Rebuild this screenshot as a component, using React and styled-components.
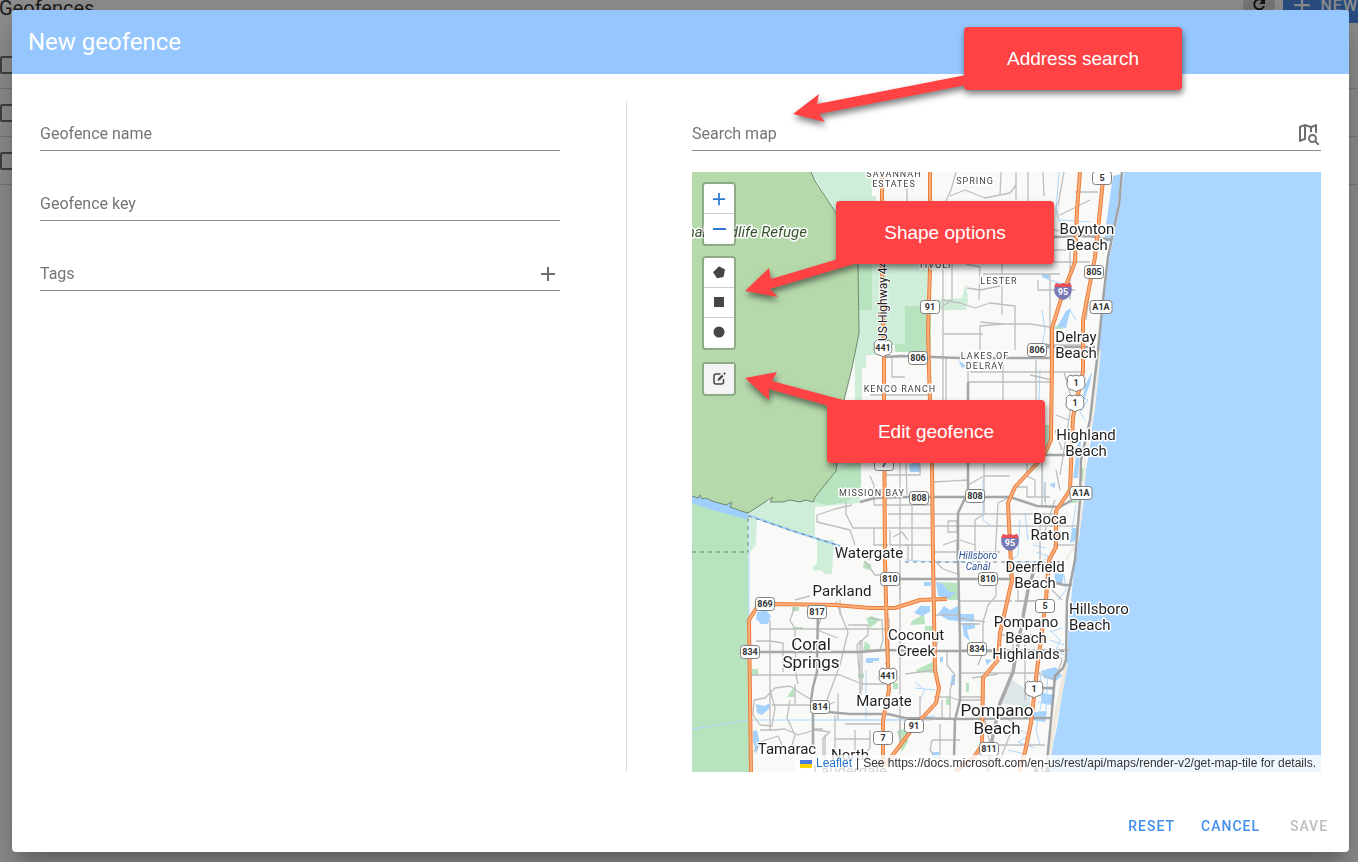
import React from "react";
import styled, { createGlobalStyle } from "styled-components";

const GlobalStyle = createGlobalStyle`
  *, *::before, *::after { box-sizing: border-box; }
  body {
    margin: 0;
    overflow: hidden;
    background: #ffffff;
    font-family: Roboto, "Liberation Sans", sans-serif;
  }
  button, input { font: inherit; }
`;

/* ---------- page behind the dialog ---------- */

const Page = styled.div`
  height: 100vh;
  overflow: hidden;
`;

const PageBar = styled.header`
  display: flex;
  align-items: center;
  gap: 8px;
  height: 36px;
  margin: -13px 0 18px -1px;
`;

const PageTitle = styled.h1`
  flex: 1;
  margin: 0;
  padding-top: 6px;
  font-size: 20px;
  font-weight: 400;
  line-height: 36px;
  color: #333333;
`;

const RoundButton = styled.button`
  display: grid;
  place-items: center;
  width: 32px;
  height: 32px;
  padding: 0;
  border: 0;
  border-radius: 50%;
  background: #d5d5d5;
  color: #222222;
`;

const NewButton = styled.button`
  display: flex;
  align-items: center;
  gap: 10px;
  height: 36px;
  margin-right: -10px;
  padding: 0 10px;
  border: 0;
  border-radius: 4px;
  background: #4a8ae8;
  color: #ffffff;
  font-size: 16px;
  font-weight: 500;
  letter-spacing: 1px;
`;

const PageRow = styled.div`
  display: flex;
  align-items: center;
  height: 48px;
  border-bottom: 1px solid #d8d8d8;
`;

const RowCheck = styled.input`
  appearance: none;
  width: 18px;
  height: 18px;
  margin: 0;
  border: 2px solid #757575;
  border-radius: 2px;
`;

/* ---------- dialog ---------- */

const Backdrop = styled.div`
  position: fixed;
  inset: 0;
  padding: 10px 9px 10px 12px;
  background: rgba(0, 0, 0, 0.44);
`;

const Dialog = styled.section`
  border-radius: 4px;
  background: #ffffff;
  box-shadow:
    0 11px 15px -7px rgba(0, 0, 0, 0.2),
    0 24px 38px 3px rgba(0, 0, 0, 0.14),
    0 9px 46px 8px rgba(0, 0, 0, 0.12);
`;

const DialogHeader = styled.header`
  display: flex;
  align-items: center;
  height: 64px;
  padding: 0 16px;
  border-radius: 4px 4px 0 0;
  background: #95c6fd;
`;

const DialogTitle = styled.h2`
  margin: 0;
  font-size: 24px;
  font-weight: 400;
  line-height: 32px;
  color: #ffffff;
`;

const DialogBody = styled.div`
  display: grid;
  grid-template-columns: 521fr 1px 629fr;
  column-gap: 65px;
  padding: 27px 28px 0;
`;

const FieldColumn = styled.div`
  display: flex;
  flex-direction: column;
  gap: 20px;
  padding-right: 1px;
`;

const Divider = styled.div`
  background: #dedede;
`;

const MapColumn = styled.div`
  position: relative;
  display: flex;
  flex-direction: column;
  gap: 21px;
`;

const FieldBox = styled.div`
  display: grid;
  grid-template-columns: 1fr auto;
  align-items: center;
  height: 50px;
  padding: 17px 0 0;
  border-bottom: 1px solid #8c8c8c;
`;

const FieldLabel = styled.label`
  grid-area: 1 / 1;
  font-size: 16px;
  line-height: 24px;
  color: #757575;
  pointer-events: none;
`;

const FieldInput = styled.input`
  grid-area: 1 / 1;
  width: 100%;
  height: 24px;
  padding: 0;
  border: 0;
  outline: 0;
  background: transparent;
  font-size: 16px;
`;

const FieldAction = styled.button`
  display: grid;
  place-items: center;
  height: 24px;
  padding: 0 ${(p) => p.$inset || 0}px 0 0;
  border: 0;
  background: transparent;
  color: #6e6e6e;
`;

const DialogFooter = styled.footer`
  display: flex;
  justify-content: flex-end;
  gap: 8px;
  padding: 36px 8px 8px;
`;

const TextButton = styled.button`
  min-width: 64px;
  height: 36px;
  padding: 0 9px;
  border: 0;
  border-radius: 4px;
  background: transparent;
  color: #448fed;
  font-size: 14px;
  font-weight: 500;
  letter-spacing: 1px;
  &:disabled { color: #bdbdbd; }
`;

function Field({ id, label, children }) {
  return (
    <FieldBox>
      <FieldInput id={id} type="text" />
      <FieldLabel htmlFor={id}>{label}</FieldLabel>
      {children}
    </FieldBox>
  );
}

/* ---------- map ---------- */

const MapFrame = styled.div`
  position: relative;
  height: 600px;
  overflow: hidden;
  background: #aad6ff;
`;

const MapDrawing = styled.svg`
  display: block;
  width: 100%;
  height: 600px;
  font-family: Roboto, "Liberation Sans", sans-serif;
`;

const MapControls = styled.div`
  position: absolute;
  top: 10px;
  left: 10px;
  display: flex;
  flex-direction: column;
  gap: 10px;
`;

const DrawControls = styled.div`
  display: flex;
  flex-direction: column;
  gap: 12px;
`;

const ControlBar = styled.div`
  border: 2px solid rgba(0, 0, 0, 0.22);
  border-radius: 4px;
  background-clip: padding-box;
`;

const ControlButton = styled.button`
  display: grid;
  place-items: center;
  width: 30px;
  height: 30px;
  padding: 0;
  border: 0;
  border-bottom: 1px solid #cccccc;
  background: ${(p) => (p.$muted ? "#f4f4f4" : "#ffffff")};
  color: ${(p) => (p.$accent ? "#2f78d4" : "#464646")};
  &:first-child { border-radius: 2px 2px 0 0; }
  &:last-child { border-bottom-color: transparent; border-radius: 0 0 2px 2px; }
`;

const Attribution = styled.div`
  position: absolute;
  right: 0;
  bottom: 0;
  display: flex;
  align-items: center;
  gap: 4px;
  height: 17px;
  padding: 0 5px;
  background: rgba(255, 255, 255, 0.8);
  color: #333333;
  font-family: "Liberation Sans", Arial, sans-serif;
  font-size: 12px;
  line-height: 17px;
  white-space: nowrap;
`;

const AttributionLink = styled.a`
  color: #2473cf;
  text-decoration: none;
`;

/* ---------- call-outs ---------- */

const CalloutLayer = styled.div`
  position: absolute;
  inset: 0;
  pointer-events: none;
  filter: drop-shadow(1px 4px 3px rgba(0, 0, 0, 0.5));
`;

const CalloutArrows = styled.svg`
  position: absolute;
  top: 0;
  left: 0;
  overflow: visible;
`;

const CalloutBox = styled.div`
  position: absolute;
  top: ${(p) => p.$top}px;
  left: ${(p) => p.$left}px;
  display: grid;
  place-items: center;
  width: 218px;
  height: 63px;
  border-radius: 4px;
  background: #ff4244;
  color: #ffffff;
  font-family: "Liberation Sans", Arial, sans-serif;
  font-size: 19px;
`;

/* The map plane is drawn in a 629 x 600 window whose origin is (692, 172). */

const refugeEdge =
  "M811 172L815 181L836 213L850 240L858 265L859 333L852 368L844 400L837 463L836 471L815 497L813 502L806 500L800 502L790 500L783 502H770L773 497L748 513L741 511L730 507L732 502L726 505L712 501L706 498L702 499L700 495L698 498L692 496";

const refuge = `${refugeEdge}V172Z`;

const lightGreens = [
  "M811 172H872V196H876V264H930V310H906V345H883V355H866V368H862V400H860V503L815 507V539L748 516L740 505L813 498L855 440V333L858 265L836 213Z",
  "M750 518H757L756 545L750 552Z",
  "M817 540H834L832 574H826L820 570L814 571L812 568L817 563Z",
  "M930 300L962 298L966 283L968 300L966 310H930Z",
];

const midGreens = [
  "M692 502L748 516L749 620V772H692Z",
  "M858 265H872V310H858Z",
  "M905 306H931V352H895V344H905Z",
  "M836 471L850 462H861V490L846 502L828 505L813 502L815 497Z",
  "M692 505L720 512L746 517L748 560L692 560Z",
  "M792 607H799V611H792Z",
  "M794 627H803V629H792Z",
  "M865 641L870 645V652H863Z",
  "M787 697L794 687V697Z",
  "M752 669H758V675H752Z",
  "M858 674H864V678H858Z",
  "M893 683H898V689H893Z",
  "M866 618L872 616L880 620L870 628Z",
  "M864 561L872 565L869 570L863 568Z",
  "M936 582L958 583V600L948 600L944 592Z",
  "M912 621L924 614L925 624L910 625Z",
  "M916 670L935 661V673L917 672Z",
  "M925 626H934V638H924Z",
  "M966 683H969V692H966Z",
  "M946 698H950V705H946Z",
  "M1042 425H1049V450L1042 456Z",
  "M1055 326L1062 325L1063 329H1054Z",
  "M1071 498H1078L1077 503H1070Z",
  "M1081 468H1084V481H1080Z",
  "M897 731L907 728L908 742L902 752Z",
  "M1020 704L1030 702V710H1020Z",
];

const lakes = [
  "M757 612L766 610L771 616L768 624L761 624L756 619Z",
  "M756 704L764 706L771 703L770 708L762 715L757 713Z",
  "M753 731L757 730L760 744L756 754L753 740Z",
  "M866 658H879V661H873V663H866Z",
  "M938 614L944 606L950 610L960 605V614H974V622L958 621L948 620Z",
  "M936 582L943 584L949 592L956 592L948 599L938 596Z",
  "M924 582H931V586H924Z",
  "M962 623H975V628L967 630L970 641L964 636Z",
  "M920 606H930V612L922 616L914 613Z",
  "M1042 274H1049V280L1042 277Z",
  "M952 675H955V685H950Z",
  "M940 657H943V662H940Z",
  "M985 659L992 660L987 665Z",
  "M909 465L919 460L921 472H910Z",
  "M958 360L966 366L962 368Z",
  "M1049 485L1055 482V488Z",
  "M1066 311L1071 308L1066 328L1057 327Z",
  "M1108 214L1118 207L1110 240L1104 245Z",
  "M1113 176L1121 174L1117 210L1106 225Z",
  "M1085 385L1092 372L1090 384L1082 405Z",
  "M1078 440L1082 430L1078 478L1073 478Z",
  "M1072 528H1078L1075 541L1070 543Z",
  "M1054 573L1064 574L1062 585L1056 584Z",
  "M1041 671L1056 667L1062 676L1056 681L1044 678Z",
  "M1042 693L1055 695L1053 704L1041 703Z",
  "M1033 712L1047 711L1045 722L1032 720Z",
  "M932 752H939V758H932Z",
];

const minorRoads = [
  "M907 172V264M1001 172L1000 195M1016 185L1010 193L985 198L965 190L950 196M1016 172V200M1028 172V201M1043 172L1044 196M956 172L951 190L945 203",
  "M952 264V300L943 306M966 264L980 267L979 300M1002 264V315M967 288L980 290L1000 286M943 300L960 303L975 308L990 303L1015 306V350",
  "M943 264V440M1003 324L980 326L980 350M980 322L1002 324L1030 324L1050 327M943 334H983M1054 262H1090M1054 230L1110 240",
  "M983 274H1060M1050 274V357M1038 280V290H1075M1054 250H1070V300M1060 215L1090 200M1075 192H1098M1064 172L1058 205",
  "M968 357V382H1050M1003 357V400M970 372H1050M1036 360V400M1050 345H1083M1046 372H1083M1086 320L1092 270",
  "M884 357H898M884 395H930M892 357V377H905M946 357V400M870 395H884V420",
  "M900 463V600M906 463L907 495M912 500V560M884 475H920V463M888 514H1056M935 526H1078M948 521H957V532H948V521",
  "M933 482L968 480V485L984 476H1010M984 463V514L975 520V560M1010 497L998 503L995 560M1016 487L1027 487V497H1050M1027 463V476L1035 480V496M1042 463V507M1045 482V502",
  "M870 476L874 485V505H933M852 505L835 509L817 515V522L850 530L855 545M846 502V514L853 528H934M874 528V545H888M890 530V545H908V560M893 537L902 532L908 540",
  "M865 561L875 575H887M934 560L943 569L960 575M905 545H933M934 552H1000M943 545L957 540V560",
  "M770 620V730M770 629H886M770 641L783 643V672M770 641H756M836 601L843 620L848 632L840 665L825 705M752 675H840L862 684H886",
  "M795 607L790 620L795 629L796 675L798 684M823 612L817 630L838 638M840 615V600M795 600L810 596M860 640L860 695M848 625H868L868 635L857 645L861 695",
  "M870 618L882 620L883 640L880 650H866M889 618V660L885 664M900 575V740M862 640V690M828 596L820 592",
  "M775 688L790 686L800 693L812 700M775 688L765 698L754 700L753 715L760 725L772 726L775 708L770 690M790 700L787 718L795 735L792 745",
  "M760 730H772L785 729L798 735L815 730L830 732L823 738V760M772 705H812M795 684V704M835 715V760H885M845 724H885M855 730V758M870 730V748L862 757M835 739H870",
  "M754 752L760 742L778 736L782 745M812 729H823M825 735V765M820 708L835 702M838 693V720",
  "M935 615H960M960 618L985 622M938 640L935 650M947 652V665L955 675L950 690V720M962 650H1070M983 622V652L978 665M972 678L998 674",
  "M905 674L935 670M900 718V750M934 697H950L958 700H983M920 696V718M942 700V718M932 740H960M932 740L930 750L935 757L955 760M940 724V760",
  "M960 697H985M960 673H1000M1000 673H1040M1013 640V670M1025 640V700M985 720L990 745H1045M1005 718L1015 722L1000 760M1018 585V601H1040",
  "M960 601H1012M996 584L996 596L988 605L983 622M960 624H980M960 540L975 545M1010 560V580M1015 601H1050M1052 590L1062 600M1000 635H1043M1055 650L1062 660L1055 680L1035 672",
  "M1056 470L1060 490M1064 372L1072 400L1064 450L1060 475M1056 415L1068 420M1055 430L1062 450M1030 375L1052 380M1055 500L1042 540M1040 514V560M1053 545H1075",
];

const greyRoads = [
  "M884 357L900 356L960 358H1050",
  "M860 502L875 498L907 497L935 497H1010L1037 506L1060 507L1072 500",
  "M1054 237L1090 236L1112 240",
  "M1047 347H1095M1046 455H1082",
  "M880 579H1010M897 579H960",
  "M760 652H860L885 650L935 651H1002M1002 651H1064",
  "M818 613L817 660V672L813 687L811 700L813 712V745",
  "M828 712L850 714H888L905 718L960 719L1050 718",
  "M968 382V492L958 513V560L960 640V700L955 720L954 757",
  "M1036 345H1054M1056 583L1064 585H1072",
  "M1038 688H1054",
];

const railRoad = "M1035 567L1028 590L1020 633L1013 672L1000 703L992 740L988 772";

const coastRoad =
  "M1122 172L1119 205L1108 257L1103 300L1098 350L1090 420L1081 460L1080 500L1075 560L1067 600L1066 660L1063 668L1055 676L1052 710L1046 772";

const waterLines = [
  "M1059 172L1056 210L1062 230M1050 280L1066 285M1042 310L1045 330L1042 345M1040 370L1039 400",
  "M1042 455L1043 490L1046 505M983 480V520L990 525M1025 513L1028 540M1020 520L1018 555L1012 560",
  "M692 729L750 720H890L935 716M866 670V720M835 720H932",
  "M749 516V620M1080 395L1088 400L1080 412L1085 420M1076 505L1072 530M1064 575L1066 590L1058 600",
  "M1050 640L1064 645M1050 632L1062 628M1048 650L1064 655M1052 660L1060 640L1050 630",
  "M1040 672L1042 700L1036 730L1040 745M1048 668L1046 710M1055 690L1042 688M1054 697L1040 696M1052 705L1038 702",
  "M1005 735L1020 730L1030 735L1018 742L1035 748M1008 750L1025 754M915 682L925 690L920 700M915 688L935 690",
  "M905 560L933 562L975 562M1010 562H1040M1060 220L1090 222M1100 230L1090 280M1070 310L1076 320",
  "M1033 545L1046 548M1036 552L1048 556L1042 562M1040 542V560",
];

const orangeRoads = [
  "M882 172V264L884 360V400L885 560L887 640L889 690L883 720V772",
  "M930 172V270L928 330L929 370L932 463L933 560L935 670L939 688L936 703L913 728L880 772",
  "M1080 172L1077 210L1075 262L1063 293L1052 328V360L1051 440L1043 457L1015 487L1008 503L1010 545L1012 580L1000 633L998 660L983 678L982 745L974 757L955 772",
  "M1103 180L1100 210L1095 257L1083 320V372L1073 417L1070 490L1056 511V547L1049 560L1046 600L1037 670L1031 723L1025 752L1019 772",
  "M751 772L749 620L757 607L775 604L835 605L870 608H895L920 600L947 599",
];

const shields = [
  { x: 1102, y: 178, text: "5" },
  { x: 1094, y: 272, text: "805" },
  { x: 1101, y: 307, text: "A1A", w: 22 },
  { x: 930, y: 307, text: "91" },
  { x: 918, y: 358, text: "806" },
  { x: 1037, y: 350, text: "806" },
  { x: 919, y: 498, text: "808" },
  { x: 975, y: 496, text: "808" },
  { x: 1081, y: 493, text: "A1A", w: 22 },
  { x: 884, y: 464, text: "7" },
  { x: 890, y: 579, text: "810" },
  { x: 988, y: 579, text: "810" },
  { x: 765, y: 604, text: "869" },
  { x: 817, y: 612, text: "817" },
  { x: 1045, y: 606, text: "5" },
  { x: 750, y: 652, text: "834" },
  { x: 977, y: 649, text: "834" },
  { x: 820, y: 707, text: "814" },
  { x: 914, y: 726, text: "91" },
  { x: 883, y: 738, text: "7" },
  { x: 989, y: 749, text: "811" },
];

const usShields = [
  { x: 883, y: 348, text: "441" },
  { x: 1076, y: 383, text: "1" },
  { x: 1075, y: 403, text: "1" },
  { x: 888, y: 676, text: "441" },
  { x: 1034, y: 689, text: "1" },
];

const interstates = [
  { x: 1063, y: 291 },
  { x: 1010, y: 542 },
];

const towns = [
  { x: 1087, y: 234, lines: ["Boynton", "Beach"] },
  { x: 1076, y: 342, lines: ["Delray", "Beach"] },
  { x: 1086, y: 440, lines: ["Highland", "Beach"] },
  { x: 1050, y: 524, lines: ["Boca", "Raton"] },
  { x: 1035, y: 572, lines: ["Deerfield", "Beach"] },
  { x: 1026, y: 627, lines: ["Pompano", "Beach", "Highlands"] },
  { x: 869, y: 558, lines: ["Watergate"] },
  { x: 842, y: 596, lines: ["Parkland"] },
  { x: 916, y: 640, lines: ["Coconut", "Creek"] },
  { x: 884, y: 706, lines: ["Margate"] },
  { x: 787, y: 754, lines: ["Tamarac"] },
  { x: 850, y: 760, lines: ["North", "Lauderdale"] },
];

const cities = [
  { x: 811, y: 650, lines: ["Coral", "Springs"] },
  { x: 997, y: 716, lines: ["Pompano", "Beach"] },
];

const districts = [
  { x: 894, y: 177, lines: ["SAVANNAH", "ESTATES"] },
  { x: 975, y: 184, lines: ["SPRING"] },
  { x: 935, y: 268, lines: ["TIVOLI"] },
  { x: 999, y: 284, lines: ["LESTER"] },
  { x: 985, y: 359, lines: ["LAKES OF", "DELRAY"] },
  { x: 900, y: 392, lines: ["KENCO RANCH"] },
  { x: 872, y: 496, lines: ["MISSION BAY"] },
];

function PlaceLabel({ place, size, step, spacing = 0, fill = "#1f1f1f", anchor = "middle", italic }) {
  return (
    <text
      textAnchor={anchor}
      fontSize={size}
      fontStyle={italic ? "italic" : "normal"}
      letterSpacing={spacing}
      fill={fill}
      stroke="#ffffff"
      strokeWidth="3"
      strokeLinejoin="round"
      paintOrder="stroke"
    >
      {place.lines.map((line, i) => (
        <tspan key={line} x={place.x} y={place.y + i * step}>
          {line}
        </tspan>
      ))}
    </text>
  );
}

function ShieldText({ x, y, children, fill = "#333333" }) {
  return (
    <text x={x} y={y + 3} textAnchor="middle" fontSize="9" fontWeight="700" fill={fill}>
      {children}
    </text>
  );
}

function AreaMap() {
  return (
    <MapDrawing viewBox="692 172 629 600" preserveAspectRatio="xMinYMin slice" role="img" aria-label="Street map">
      <rect x="692" y="172" width="629" height="600" fill="#f9faf8" />
      <g fill="#cfeeda">{lightGreens.map((d) => <path key={d} d={d} />)}</g>
      <g fill="#b7e3bf">{midGreens.map((d) => <path key={d} d={d} />)}</g>
      <path d="M692 490L726 500L748 511L747 520L742 518L712 510L692 503Z" fill="#9fd0fb" />
      <path d={refuge} fill="#b6d9ac" />
      <path d={refugeEdge} fill="none" stroke="#6f8a72" strokeWidth="1" />
      <path d="M1012 680L1030 692V706L1000 704Z" fill="#dde7e9" />
      <path d="M1124 172L1119 212L1109 260L1102 317L1097 370L1091 440L1086 470L1081 520L1074 570L1069 620L1067 660L1065 676L1057 727L1050 757L1048 772H1321V172Z" fill="#aad6ff" />
      <g fill="#a6d3fd">{lakes.map((d) => <path key={d} d={d} />)}</g>
      <g fill="none" stroke="#aed8fc" strokeWidth="1">{waterLines.map((d) => <path key={d} d={d} />)}</g>
      <path d="M748 515L790 530L840 546L848 552" fill="none" stroke="#9fd0fb" strokeWidth="2" />
      <g fill="none" stroke="#bdbebe" strokeWidth="1.3" strokeLinejoin="round">{minorRoads.map((d) => <path key={d} d={d} />)}</g>
      <g fill="none" stroke="#a5a6a7" strokeWidth="2.5" strokeLinejoin="round">{greyRoads.map((d) => <path key={d} d={d} />)}</g>
      <path d={railRoad} fill="none" stroke="#a9a9a9" strokeWidth="3.5" />
      <path d="M1066 560L1078 540L1083 500L1085 460L1094 410L1100 350" fill="none" stroke="#f3ece2" strokeWidth="2" />
      <path d="M1066 664L1063 680L1055 720L1048 765" fill="none" stroke="#efe9dd" strokeWidth="4" />
      <path d={coastRoad} fill="none" stroke="#a0a2a4" strokeWidth="2.5" strokeLinejoin="round" />
      <g fill="none" stroke="#6b8199" strokeWidth="1" strokeDasharray="4 4">
        <path d="M748 516L790 530L840 546L870 560M905 562H1060" />
        <path d="M692 552H749M748 518V552" stroke="#6f8a72" />
      </g>
      <g fill="none" stroke="#ec7e3c" strokeWidth="4" strokeLinejoin="round">{orangeRoads.map((d) => <path key={d} d={d} />)}</g>
      <g fill="none" stroke="#faae7c" strokeWidth="2" strokeLinejoin="round">{orangeRoads.map((d) => <path key={d} d={d} />)}</g>

      {shields.map(({ x, y, text, w = 19 }) => (
        <g key={`${x}-${y}`}>
          <rect x={x - w / 2} y={y - 6.5} width={w} height="13" rx="3" fill="#ffffff" stroke="#808080" />
          <ShieldText x={x} y={y}>{text}</ShieldText>
        </g>
      ))}
      {usShields.map(({ x, y, text }) => (
        <g key={`${x}-${y}`}>
          <path
            transform={`translate(${x} ${y})`}
            d="M-6 -8Q-3 -6 0 -8Q3 -6 6 -8L9 -5Q8 -2 9 1Q9 6 4 7Q2 7 0 9Q-2 7 -4 7Q-9 6 -9 1Q-8 -2 -9 -5Z"
            fill="#ffffff"
            stroke="#808080"
          />
          <ShieldText x={x} y={y}>{text}</ShieldText>
        </g>
      ))}
      {interstates.map(({ x, y }) => (
        <g key={`${x}-${y}`}>
          <path transform={`translate(${x} ${y})`} d="M-7 -8Q-3 -6 0 -8Q3 -6 7 -8Q10 -2 8 3Q5 8 0 9Q-5 8 -8 3Q-10 -2 -7 -8Z" fill="#7679b4" />
          <path transform={`translate(${x} ${y})`} d="M-7 -8Q-3 -6 0 -8Q3 -6 7 -8L9 -4H-9Z" fill="#ea4f57" />
          <ShieldText x={x} y={y + 1} fill="#ffffff">95</ShieldText>
        </g>
      ))}

      <text transform="translate(887 341) rotate(-90)" fontSize="12" fill="#222222" stroke="#ffffff" strokeWidth="2" paintOrder="stroke">
        US Highway 441
      </text>
      {districts.map((p) => <PlaceLabel key={p.lines[0]} place={p} size={9} step={10} spacing={1} fill="#444444" />)}
      {towns.map((p) => <PlaceLabel key={p.x} place={p} size={15} step={16} />)}
      {cities.map((p) => <PlaceLabel key={p.x} place={p} size={17} step={18} />)}
      <PlaceLabel place={{ x: 1069, y: 614, lines: ["Hillsboro", "Beach"] }} size={15} step={16} anchor="start" />
      <PlaceLabel place={{ x: 978, y: 559, lines: ["Hillsboro", "Canal"] }} size={10} step={11} fill="#2a5597" italic />
      <PlaceLabel place={{ x: 807, y: 237, lines: ["National Wildlife Refuge"] }} size={15} step={16} fill="#37542c" anchor="end" italic />
      <text x="1042" y="774" textAnchor="middle" fontSize="9" fontWeight="700" fill="#333333">A1A</text>
    </MapDrawing>
  );
}

/* ---------- icons ---------- */

function PlusIcon({ size = 16, weight = 1 }) {
  return (
    <svg width={size} height={size} viewBox="0 0 16 16" fill="none" stroke="currentColor" strokeWidth={weight} aria-hidden="true">
      <path d="M8 1V15M1 8H15" />
    </svg>
  );
}

function MinusIcon() {
  return (
    <svg width="14" height="14" viewBox="0 0 14 14" fill="none" stroke="currentColor" strokeWidth="2" aria-hidden="true">
      <path d="M1 7H14" />
    </svg>
  );
}

function RefreshIcon() {
  return (
    <svg width="20" height="20" viewBox="0 0 20 20" fill="none" stroke="currentColor" strokeWidth="2" aria-hidden="true">
      <path d="M14 6A5 5 0 1 0 15 11" />
      <path d="M16 3V9H10Z" fill="currentColor" stroke="none" />
    </svg>
  );
}

function MapSearchIcon() {
  return (
    <svg width="24" height="24" viewBox="0 0 24 24" fill="currentColor" aria-hidden="true">
      <path d="M15.5 12C18 12 20 14 20 16.5C20 17.38 19.75 18.21 19.31 18.9L22.39 22L21 23.39L17.88 20.32C17.19 20.75 16.37 21 15.5 21C13 21 11 19 11 16.5C11 14 13 12 15.5 12M15.5 14A2.5 2.5 0 0 0 13 16.5A2.5 2.5 0 0 0 15.5 19A2.5 2.5 0 0 0 18 16.5A2.5 2.5 0 0 0 15.5 14M19.5 2A.5 .5 0 0 1 20 2.5V11.81C19.42 11.26 18.75 10.81 18 10.5V4.7L15 5.86V10C14.3 10.06 13.62 10.22 13 10.5V5.87L9 4.47V16.13L9.03 16.14C9 16.26 9 16.38 9 16.5C9 17.14 9.09 17.76 9.26 18.34L8 17.9L2.66 19.97L2.5 20A.5 .5 0 0 1 2 19.5V4.38C2 4.15 2.15 3.97 2.36 3.9L8 2L14 4.1L19.34 2.03L19.5 2M4 5.46V17.31L7 16.15V4.45L4 5.46Z" />
    </svg>
  );
}

function ShapeIcon({ shape }) {
  return (
    <svg width="12" height="13" viewBox="0 0 12 13" fill="currentColor" aria-hidden="true">
      {shape === "polygon" && <path d="M6 .3L12 3.6L10.500 11L4 12.300L0 6.300Z" />}
      {shape === "rectangle" && <path d="M1 1H11V11H1Z" />}
      {shape === "circle" && <circle cx="6" cy="6" r="5.500" />}
    </svg>
  );
}

function EditIcon() {
  return (
    <svg width="15" height="15" viewBox="0 0 15 15" fill="none" stroke="currentColor" strokeWidth="1.5" aria-hidden="true">
      <path d="M8.500 3H4Q2 3 2 5V11Q2 13 4 13H9.500Q11.500 13 11.500 11V8" />
      <path d="M5.500 9.800L6.100 7.600L10 3.700L11.600 5.300L7.700 9.200Z" fill="currentColor" stroke="none" />
      <path d="M12.500 .8L13 2.200L14.400 2.700L13 3.200L12.500 4.600L12 3.200L10.800 2.700L12 2.200Z" fill="currentColor" stroke="none" />
    </svg>
  );
}

function FlagIcon() {
  return (
    <svg width="12" height="8" viewBox="0 0 12 8" aria-hidden="true">
      <path fill="#4c7be1" d="M0 0h12v4H0z" />
      <path fill="#ffd500" d="M0 4h12v4H0z" />
    </svg>
  );
}

/* ---------- screen ---------- */

export default function App() {
  return (
    <>
      <GlobalStyle />
      <Page>
        <PageBar>
          <PageTitle>Geofences</PageTitle>
          <RoundButton type="button" aria-label="Refresh"><RefreshIcon /></RoundButton>
          <NewButton type="button"><PlusIcon size={18} weight={2} />NEW</NewButton>
        </PageBar>
        {["all", "first", "second"].map((row) => (
          <PageRow key={row}>
            <RowCheck type="checkbox" aria-label={`Select ${row}`} />
          </PageRow>
        ))}
      </Page>

      <Backdrop>
        <Dialog role="dialog" aria-modal="true" aria-labelledby="dialog-title">
          <DialogHeader>
            <DialogTitle id="dialog-title">New geofence</DialogTitle>
          </DialogHeader>

          <DialogBody>
            <FieldColumn>
              <Field id="geofence-name" label="Geofence name" />
              <Field id="geofence-key" label="Geofence key" />
              <Field id="tags" label="Tags">
                <FieldAction type="button" $inset={4} aria-label="Add tag"><PlusIcon weight={2} /></FieldAction>
              </Field>
            </FieldColumn>
            <Divider />
            <MapColumn>
              <Field id="search-map" label="Search map">
                <FieldAction type="button" aria-label="Search on map"><MapSearchIcon /></FieldAction>
              </Field>
              <MapFrame>
                <AreaMap />
                <MapControls>
                  <ControlBar>
                    <ControlButton type="button" $accent aria-label="Zoom in"><PlusIcon size={14} weight={2} /></ControlButton>
                    <ControlButton type="button" $accent aria-label="Zoom out"><MinusIcon /></ControlButton>
                  </ControlBar>
                  <DrawControls>
                    <ControlBar>
                      {["polygon", "rectangle", "circle"].map((shape) => (
                        <ControlButton key={shape} type="button" aria-label={`Draw a ${shape}`}>
                          <ShapeIcon shape={shape} />
                        </ControlButton>
                      ))}
                    </ControlBar>
                    <ControlBar>
                      <ControlButton type="button" $muted aria-label="Edit layers"><EditIcon /></ControlButton>
                    </ControlBar>
                  </DrawControls>
                </MapControls>
                <Attribution>
                  <FlagIcon />
                  <AttributionLink href="#leaflet">Leaflet</AttributionLink>
                  <span>|</span>
                  <span>See https://docs.microsoft.com/en-us/rest/api/maps/render-v2/get-map-tile for details.</span>
                </Attribution>
              </MapFrame>

              <CalloutLayer>
                <CalloutArrows width="1" height="1" fill="#ff4244" aria-hidden="true">
                  <path d="M101 13L127 -7L125 3L274 -26V-16L127 13L133 21Z" />
                  <path d="M53 190L77 167L79 178L146 158L162 163L78 188L86 196Z" />
                  <path d="M53 277L85 271L80 280L155 300L137 305L77 288V299Z" />
                </CalloutArrows>
                <CalloutBox $top={-74} $left={272}>Address search</CalloutBox>
                <CalloutBox $top={100} $left={144}>Shape options</CalloutBox>
                <CalloutBox $top={299} $left={135}>Edit geofence</CalloutBox>
              </CalloutLayer>
            </MapColumn>
          </DialogBody>

          <DialogFooter>
            <TextButton type="button">RESET</TextButton>
            <TextButton type="button">CANCEL</TextButton>
            <TextButton type="button" disabled>SAVE</TextButton>
          </DialogFooter>
        </Dialog>
      </Backdrop>
    </>
  );
}
